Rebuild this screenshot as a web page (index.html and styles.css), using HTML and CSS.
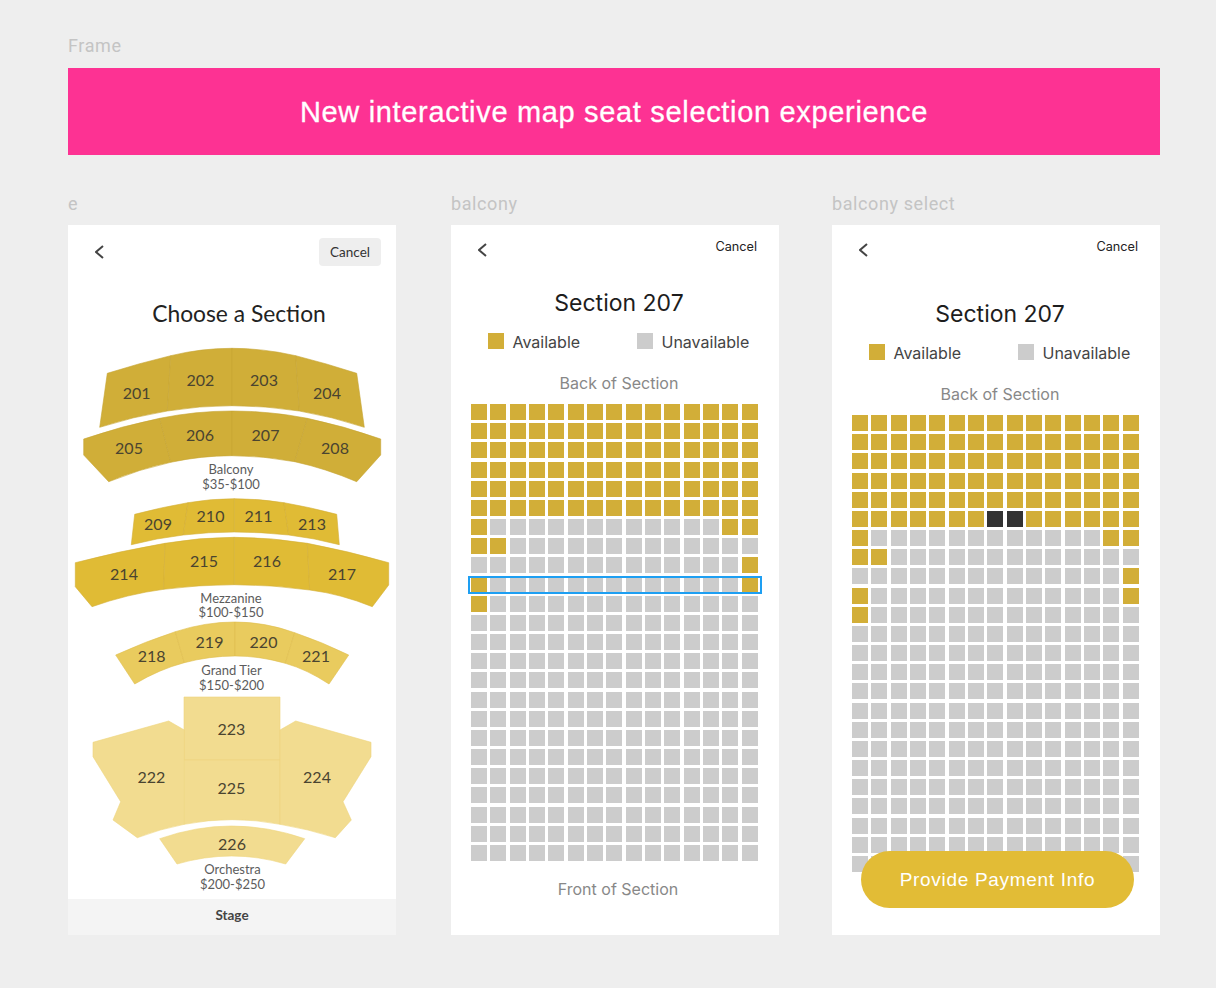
FILE: index.html
```html
<!DOCTYPE html>
<html lang="en">

<head>
  <meta charset="UTF-8">
  <title>Seat selection</title>
  <link rel="stylesheet" href="styles.css">
</head>

<body>

  <div class="frame-label">Frame</div>
  <h1 class="banner">New interactive map seat selection experience</h1>

  <div class="screens">

    <div class="column">
      <div class="screen-label">e</div>
      <div class="screen">
        <div class="map-header">
          <svg class="back" width="9" height="14" viewBox="0 0 9 14"><path d="M8 1 1 7l7 6"/></svg>
          <button class="cancel-btn">Cancel</button>
        </div>
        <h2 class="map-title">Choose a Section</h2>

        <svg class="seat-map" width="328" height="559" viewBox="68 340 328 559">
          <g class="sec balcony">
            <path d="M107.3 373.3Q139 363.3 170.7 355.7L167.3 411Q133.5 416.5 99.7 427.3Z"/>
            <path d="M170.7 355.7Q201 348.3 232 348.3V405.7Q199.6 405.7 167.3 411Z"/>
            <path d="M232 348.3Q263 348.3 295.7 355.7L299.3 411Q265.6 405.7 232 405.7Z"/>
            <path d="M295.7 355.7Q326 363.3 356.7 373.3L364.3 427.3Q331.8 416.5 299.3 411Z"/>
            <path d="M83.7 439Q121.7 426 159.7 418.3L170.7 462.3Q139.7 469 108.7 481.7L83.7 455Z"/>
            <path d="M159.7 418.3Q195.9 411 232 411V455.7Q201 455.7 170.7 462.3Z"/>
            <path d="M232 411Q269.6 411 307.3 418.3L294.7 461.7Q263.3 455.7 232 455.7Z"/>
            <path d="M307.3 418.3Q344 426 380.7 439V455L356.7 481.7Q325.7 468.5 294.7 461.7Z"/>
          </g>
          <g class="sec mezzanine">
            <path d="M134.7 514.3Q161.3 507.3 188 502.7L183.3 535Q157.3 538 131.3 544.7Z"/>
            <path d="M188 502.7Q211.1 498.7 234.3 498.7V532Q208.8 532 183.3 535Z"/>
            <path d="M234.3 498.7Q259.1 498.7 284 502.7L288.7 535Q261.5 532 234.3 532Z"/>
            <path d="M284 502.7Q310.3 507.3 336.7 514.3L339.3 544.7Q314 538 288.7 535Z"/>
            <path d="M75.3 562.7Q120 551 165 543.3L163.7 589.3Q127.8 594 92 606.7L75.3 586.7Z"/>
            <path d="M165 543.3Q199.6 537.3 234.3 537.3V584.7Q199 584.7 163.7 589.3Z"/>
            <path d="M234.3 537.3Q270.8 537.3 307.3 543.3L309.7 590Q272 584.7 234.3 584.7Z"/>
            <path d="M307.3 543.3Q348 551 388.7 562.7V585L372.3 606.7Q341 594 309.7 590Z"/>
          </g>
          <g class="sec grand">
            <path d="M115.7 655Q145.5 641.4 175.3 631.7L184.3 662.7Q159.5 669.2 134.7 684Z"/>
            <path d="M175.3 631.7Q205 622 235 622V656Q209.6 656 184.3 662.7Z"/>
            <path d="M235 622Q265 622 294.7 632.7L285.3 663.3Q260 656 235 656Z"/>
            <path d="M294.7 632.7Q322 642 348.7 655L329 684Q307 669.5 285.3 663.3Z"/>
          </g>
          <g class="sec orchestra">
            <path d="M184 697H280V760H184Z"/>
            <path d="M184.3 760H280V824.3Q232 815 184.3 824.3Z"/>
            <path d="M93 742.3 168.7 721 184.3 730V824.3Q160 829 137.3 837.7L113 820 120.7 801.7 93 756.7Z"/>
            <path d="M280 730 295.7 721 371 742.3V756.7L343 801.7 351.3 820 335.3 837.7Q308 829 280 824.3Z"/>
            <path d="M159.7 838.7Q196 826 231.3 826Q268 826 304.7 838.7L285.7 864Q232 848 177 864Z"/>
          </g>

          <g class="num">
            <text x="136.7" y="392.3">201</text><text x="200.3" y="379">202</text>
            <text x="264" y="379">203</text><text x="327" y="392.3">204</text>
            <text x="129" y="447.7">205</text><text x="200" y="434.7">206</text>
            <text x="265.5" y="434.7">207</text><text x="335" y="447.7">208</text>
            <text x="158" y="523.7">209</text><text x="210.5" y="515">210</text>
            <text x="258.5" y="515">211</text><text x="312" y="523.7">213</text>
            <text x="124" y="573.7">214</text><text x="204" y="560.5">215</text>
            <text x="267" y="560.5">216</text><text x="342" y="573.7">217</text>
            <text x="151.7" y="655.7">218</text><text x="209.5" y="641">219</text>
            <text x="263.5" y="641">220</text><text x="316" y="655.7">221</text>
            <text x="151.3" y="776">222</text><text x="231.3" y="728">223</text>
            <text x="317" y="776">224</text><text x="231.3" y="787.7">225</text>
            <text x="232" y="843">226</text>
          </g>

          <g class="tier">
            <text x="231" y="469">Balcony</text><text x="231" y="484">$35-$100</text>
            <text x="231" y="597.5">Mezzanine</text><text x="231" y="612">$100-$150</text>
            <text x="231.5" y="670">Grand Tier</text><text x="231.5" y="685">$150-$200</text>
            <text x="232.5" y="869">Orchestra</text><text x="232.5" y="884">$200-$250</text>
          </g>
        </svg>

        <div class="stage">Stage</div>
      </div>
    </div>

    <div class="column">
      <div class="screen-label">balcony</div>
      <div class="screen">
        <div class="seat-header">
          <svg class="back" width="9" height="14" viewBox="0 0 9 14"><path d="M8 1 1 7l7 6"/></svg>
          <span class="cancel-link">Cancel</span>
        </div>
        <h2 class="seat-title">Section 207</h2>
        <div class="legend">
          <div class="legend-item"><span class="swatch open"></span>Available</div>
          <div class="legend-item"><span class="swatch"></span>Unavailable</div>
        </div>
        <div class="seat-note">Back of Section</div>
        <div class="seats" id="seatsBalcony">
          <div class="row-highlight"></div>
        </div>
        <div class="seat-note front">Front of Section</div>
      </div>
    </div>

    <div class="column">
      <div class="screen-label">balcony select</div>
      <div class="screen">
        <div class="seat-header">
          <svg class="back" width="9" height="14" viewBox="0 0 9 14"><path d="M8 1 1 7l7 6"/></svg>
          <span class="cancel-link">Cancel</span>
        </div>
        <h2 class="seat-title lower">Section 207</h2>
        <div class="legend">
          <div class="legend-item"><span class="swatch open"></span>Available</div>
          <div class="legend-item"><span class="swatch"></span>Unavailable</div>
        </div>
        <div class="seat-note">Back of Section</div>
        <div class="seats" id="seatsSelect"></div>
        <button class="pay-btn">Provide Payment Info</button>
      </div>
    </div>

  </div>

  <script>
    // row index -> columns that are still available
    const openSeats = {
      0: 'all', 1: 'all', 2: 'all', 3: 'all', 4: 'all', 5: 'all',
      6: [0, 13, 14],
      7: [0, 1],
      8: [14],
      9: [0, 14],
      10: [0]
    };

    function drawSeats(id, picked) {
      const box = document.getElementById(id);
      for (let r = 0; r < 24; r++) {
        for (let c = 0; c < 15; c++) {
          const seat = document.createElement('div');
          const open = openSeats[r] === 'all' || (openSeats[r] && openSeats[r].includes(c));
          seat.className = 'seat';
          if (open) seat.classList.add('open');
          if (picked.includes(r + '-' + c)) seat.classList.add('picked');
          box.appendChild(seat);
        }
      }
    }

    drawSeats('seatsBalcony', []);
    drawSeats('seatsSelect', ['5-7', '5-8']);
  </script>

</body>

</html>
```

FILE: styles.css
```css
* {
  box-sizing: border-box;
}

body {
  margin: 0;
  padding: 36px 56px 53px 68px;
  background: #eeeeee;
  font-family: Inter, sans-serif;
}

.frame-label,
.screen-label {
  font-family: Roboto, sans-serif;
  font-size: 18px;
  line-height: 20px;
  letter-spacing: 0.6px;
  color: #c4c4c4;
}

.banner {
  height: 87px;
  margin: 12px 0 39px;
  background: #fd3293;
  color: #fff;
  font-family: "Liberation Sans", sans-serif;
  font-size: 29px;
  font-weight: 400;
  line-height: 89px;
  letter-spacing: 0.67px;
  text-align: center;
  -webkit-text-stroke: 0.3px #fff;
}

.screens {
  display: grid;
  grid-template-columns: 383px 381px 328px;
}

.screen-label {
  margin-bottom: 11px;
}

.screen {
  position: relative;
  width: 328px;
  height: 710px;
  background: #fff;
}

/* section map screen */
.map-header {
  display: flex;
  justify-content: space-between;
  align-items: center;
  padding: 13px 15px 0 27px;
}

.back {
  fill: none;
  stroke: #444;
  stroke-width: 2;
}

.cancel-btn {
  width: 62px;
  height: 28px;
  padding: 0;
  border: none;
  border-radius: 4px;
  background: #eeeeee;
  color: #333;
  font-family: Lato, sans-serif;
  font-size: 13.5px;
}

.map-title {
  margin: 32px 0 12px;
  padding-left: 14px;
  color: #222;
  font-family: Lato, sans-serif;
  font-size: 22.8px;
  font-weight: 400;
  line-height: 30px;
  text-align: center;
}

.seat-map {
  display: block;
}

.sec path {
  stroke-width: 0.6;
}

.balcony path {
  fill: #d0ae38;
  stroke: #c6a534;
}

.mezzanine path {
  fill: #e0bb35;
  stroke: #d3af35;
}

.grand path {
  fill: #e9cb5e;
  stroke: #dfbe4e;
}

.orchestra path {
  fill: #f2dc90;
  stroke: #eed57e;
}

.seat-map text {
  font-family: Lato, sans-serif;
  text-anchor: middle;
  dominant-baseline: central;
}

.num text {
  font-size: 16px;
  fill: #4a4430;
}

.tier text {
  font-size: 13px;
  fill: #5c5c5c;
}

.stage {
  height: 36px;
  background: #f4f4f4;
  color: #444;
  font-family: Lato, sans-serif;
  font-size: 13.5px;
  font-weight: 700;
  line-height: 33px;
  text-align: center;
}

/* seat screens */
.seat-header {
  display: flex;
  justify-content: space-between;
  align-items: flex-start;
  padding: 15px 22px 0 27px;
}

.seat-header .back {
  margin-top: 3px;
}

.cancel-link {
  color: #222;
  font-size: 12.7px;
  line-height: 14px;
}

.seat-title {
  margin: 31px 0 15px;
  padding-left: 8px;
  color: #1d1d1d;
  font-size: 23px;
  font-weight: 400;
  line-height: 30px;
  text-align: center;
}

.seat-title.lower {
  margin-top: 42px;
}

.legend {
  display: flex;
  padding-left: 37px;
}

.legend-item {
  display: flex;
  flex: none;
  align-items: flex-start;
  width: 149px;
  color: #444;
  font-size: 16px;
  line-height: 18px;
}

.swatch {
  width: 16px;
  height: 16px;
  margin-right: 8.5px;
  background: #cccccc;
}

.swatch.open {
  background: #d2ae38;
}

.seat-note {
  margin: 22px 0 11px;
  padding-left: 8px;
  color: #888;
  font-size: 16px;
  line-height: 20px;
  text-align: center;
}

.seat-note.front {
  margin: 18px 0 0;
  padding-left: 6px;
}

.seats {
  position: relative;
  display: grid;
  grid-template-columns: repeat(15, 16px);
  grid-auto-rows: 16px;
  justify-content: space-between;
  align-content: space-between;
  width: 287px;
  height: 457px;
  margin-left: 20px;
}

.seat {
  background: #cccccc;
}

.seat.open {
  background: #d2ae38;
}

.seat.picked {
  background: #333333;
}

.row-highlight {
  position: absolute;
  left: -3px;
  right: -4px;
  top: 172px;
  height: 18px;
  border: 2px solid #1e9ff2;
  z-index: 1;
}

.pay-btn {
  position: absolute;
  left: 29px;
  top: 626px;
  width: 273px;
  height: 57px;
  border: none;
  border-radius: 29px;
  background: #e2bc36;
  color: #fff;
  font-family: "Liberation Sans", sans-serif;
  font-size: 19px;
  letter-spacing: 0.7px;
}
```
